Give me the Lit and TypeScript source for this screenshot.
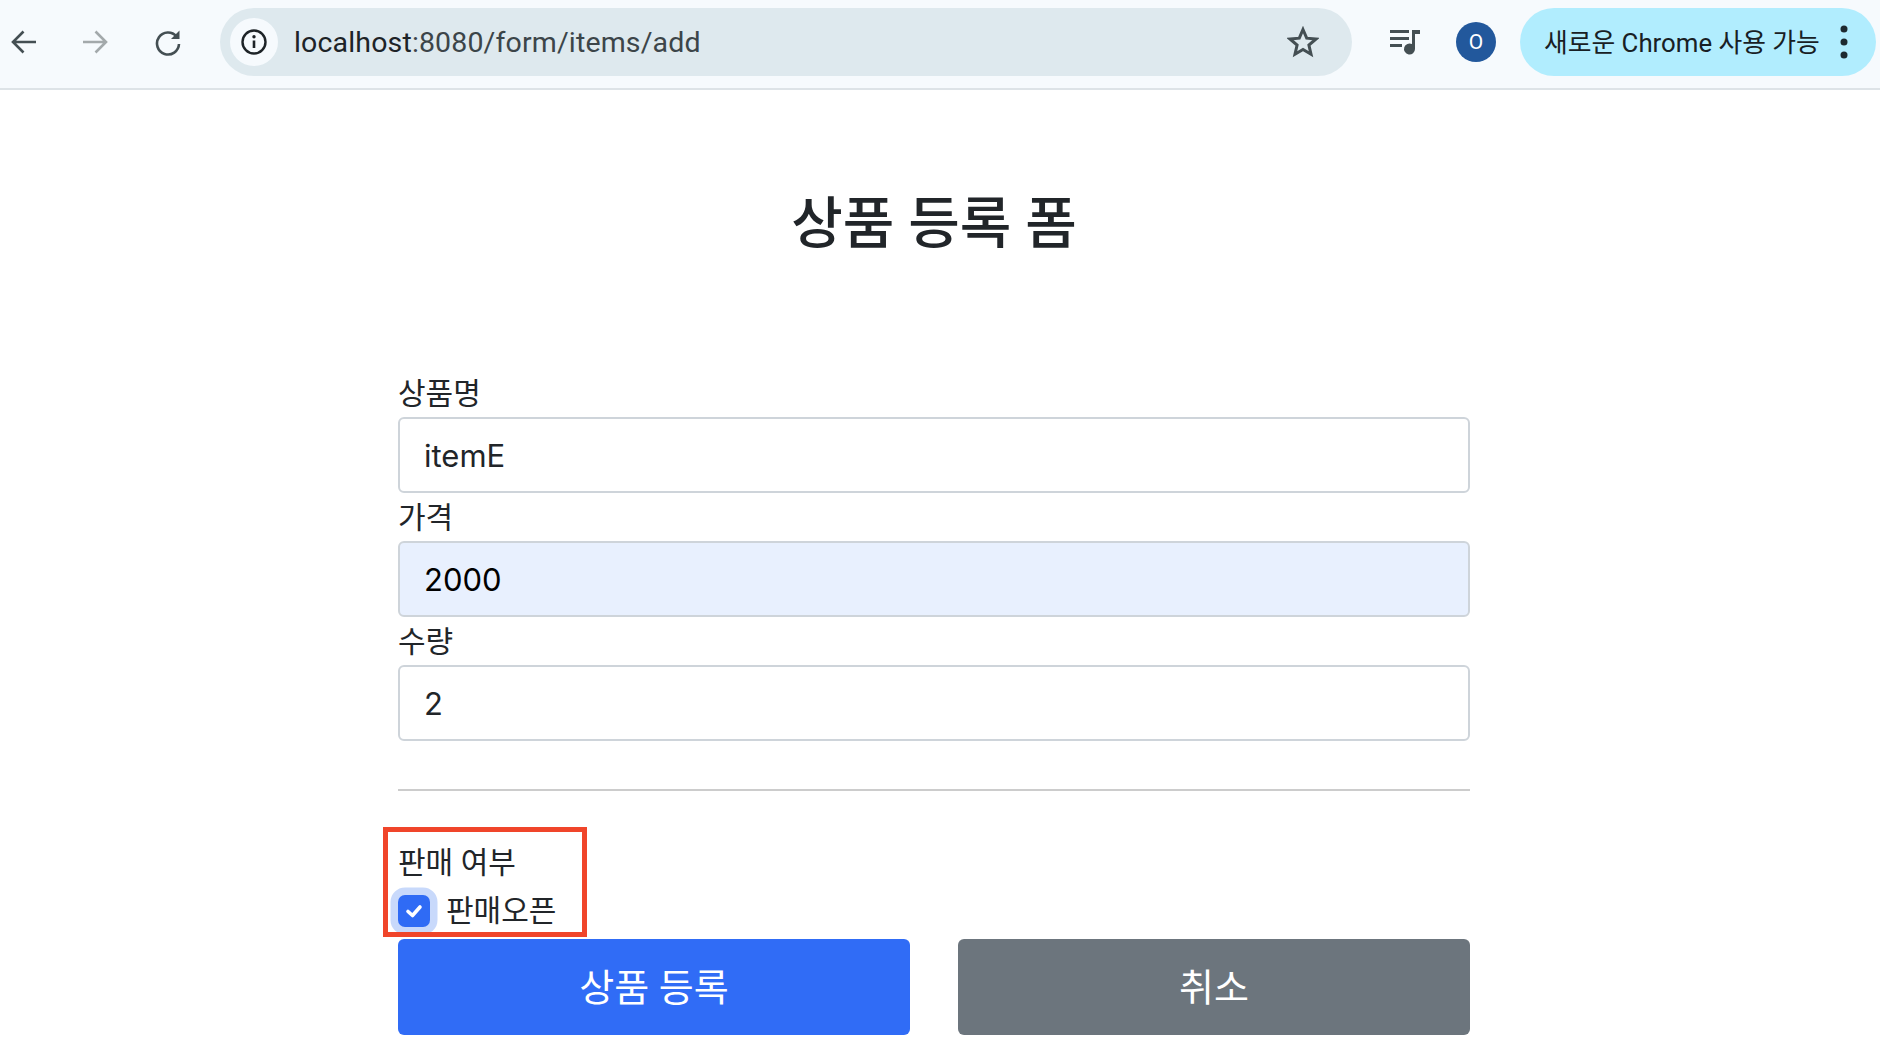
import { LitElement, html, css } from "lit";
import { customElement } from "lit/decorators.js";

@customElement("app-root")
export class AppRoot extends LitElement {
  static styles = css`
    :host { display: block; width: 1880px; height: 1044px; overflow: hidden; background: #fff; color: #212529;
      font-family: Roboto, "Noto Sans CJK KR", sans-serif; }
    * { box-sizing: border-box; }
    .bar { height: 90px; background: #f6fafd; border-bottom: 2px solid #dde3e7; display: flex; align-items: center; padding: 0 4px 4px 0; }
    .nav { width: 48px; height: 48px; display: flex; align-items: center; justify-content: center; flex: none; }
    .nav svg { display: block; }
    .fwd { margin-left: 23px; }
    .reload { margin-left: 25px; margin-right: 28px; }
    .omni { width: 1132px; height: 68px; border-radius: 34px; background: #dee9ee; display: flex; align-items: center; padding: 0 33px 0 10px; flex: none; }
    .info { width: 48px; height: 48px; border-radius: 50%; background: #f6fafd; display: flex; align-items: center; justify-content: center; }
    .url { margin-left: 16px; font-size: 28.5px; color: #3c4549; flex: 1; letter-spacing: .15px; }
    .url b { font-weight: 400; color: #1d2327; }
    .media { margin-left: 36px; width: 36px; display: flex; }
    .avatar { margin-left: 32px; width: 40px; height: 40px; border-radius: 50%; background: #22589c; color: #fff; font-size: 21px; display: flex; align-items: center; justify-content: center; flex: none; }
    .update { margin-left: 24px; width: 356px; height: 68px; border-radius: 34px; background: #b1edfe; display: flex; align-items: center; padding: 0 12px 0 24px; font-size: 25.8px; color: #182024; flex: none; }
    .update span { flex: 1; white-space: nowrap; padding-bottom: 3px; }
    .dots { width: 40px; display: flex; justify-content: center; }
    .page { width: 1072px; margin-left: 398px; }
    h2 { margin: 0; padding-top: 101px; height: 291px; text-align: center; font-size: 56px; line-height: 66px; font-weight: 500; }
    .label { display: block; font-size: 30px; line-height: 26px; height: 36px; }
    .input { height: 76px; border: 2px solid #ced4da; border-radius: 6px; padding: 0 24px; display: flex; align-items: center; font-family: Inter, Roboto, sans-serif; font-size: 31px; background: #fff; }
    .input.auto { background: #e8f0fe; color: #000; }
    .rows { display: flex; flex-direction: column; }
    .rows .label { margin-top: 12px; }
    .rows .label.first { margin-top: 0; }
    .hr { height: 2px; background: #ccc; margin-top: 48px; }
    .sale { position: relative; margin-top: 36px; height: 110px; padding-top: 18px; }
    .outline { position: absolute; left: -15px; top: 0; width: 204px; height: 110px; border: 5px solid #f0452a; pointer-events: none; }
    .sale-title { font-size: 30px; line-height: 36px; }
    .check { display: flex; align-items: center; margin-top: 12px; font-size: 30px; line-height: 36px; }
    .box { width: 32px; height: 32px; border-radius: 7px; background: #2f6bf5; box-shadow: 0 0 0 7.5px #c8d9fb; display: flex; align-items: center; justify-content: center; flex: none; }
    .check-text { margin-left: 16px; }
    .btns { display: flex; gap: 48px; margin-top: 2px; }
    .btn { flex: 1; height: 96px; border-radius: 6px; display: flex; align-items: center; justify-content: center; color: #fff; font-size: 38px; padding-bottom: 5px; }
    .primary { background: #306cf6; }
    .secondary { background: #6c757d; }
  `;

  render() {
    return html`
      <div class="bar">
        <div class="nav back"><svg width="28" height="28" viewBox="0 0 28 28" fill="none" stroke="#444f53" stroke-width="2.6"><path d="M26 14H3M13.500 3.500 3 14l10.500 10.500"/></svg></div>
        <div class="nav fwd"><svg width="28" height="28" viewBox="0 0 28 28" fill="none" stroke="#a3a9ab" stroke-width="2.6"><path d="M2 14h23M14.500 3.500 25 14 14.500 24.500"/></svg></div>
        <div class="nav reload"><svg width="28" height="28" viewBox="0 0 28 28" fill="none"><path d="M22.500 8.500A11 11 0 1 0 25 16" stroke="#444f53" stroke-width="2.600"/><path d="M25.500 2.500V11H17Z" fill="#444f53"/></svg></div>
        <div class="omni">
          <div class="info"><svg width="28" height="28" viewBox="0 0 28 28" fill="none"><circle cx="14" cy="14" r="11.500" stroke="#1d2327" stroke-width="2.400"/><path d="M14 12.500V20" stroke="#1d2327" stroke-width="2.600"/><circle cx="14" cy="8.800" r="1.700" fill="#1d2327"/></svg></div>
          <div class="url"><b>localhost</b>:8080/form/items/add</div>
          <svg width="32" height="32" viewBox="0 0 32 32" fill="none"><path d="M16 3.500 19.700 12.200 29 13 21.900 19.100 24 28.200 16 23.400 8 28.200 10.100 19.100 3 13 12.300 12.200Z" stroke="#444f53" stroke-width="3"/></svg>
        </div>
        <div class="media"><svg width="32" height="32" viewBox="0 0 32 32" fill="#444f53"><path d="M2 4h19v3H2zM2 11h19v3H2zM2 18h12v3H2z"/><path d="M24 4h8v4h-5v15a5.500 5.500 0 1 1-3-4.900z"/></svg></div>
        <div class="avatar">O</div>
        <div class="update"><span>새로운 Chrome 사용 가능</span>
          <div class="dots"><svg width="10" height="36" viewBox="0 0 10 36" fill="#1d2a30"><circle cx="5" cy="5" r="3.500"/><circle cx="5" cy="18" r="3.500"/><circle cx="5" cy="31" r="3.500"/></svg></div>
        </div>
      </div>
      <div class="page">
        <h2>상품 등록 폼</h2>
        <div class="rows">
          <label class="label first">상품명</label>
          <div class="input">itemE</div>
          <label class="label">가격</label>
          <div class="input auto">2000</div>
          <label class="label">수량</label>
          <div class="input">2</div>
        </div>
        <div class="hr"></div>
        <div class="sale">
          <div class="outline"></div>
          <div class="sale-title">판매 여부</div>
          <div class="check">
            <div class="box"><svg width="22" height="22" viewBox="0 0 22 22" fill="none" stroke="#fff" stroke-width="3.600" stroke-linecap="round" stroke-linejoin="round"><path d="M5 11.500 9.500 15.500 17 7"/></svg></div>
            <span class="check-text">판매오픈</span>
          </div>
        </div>
        <div class="btns">
          <div class="btn primary">상품 등록</div>
          <div class="btn secondary">취소</div>
        </div>
      </div>
    `;
  }
}
